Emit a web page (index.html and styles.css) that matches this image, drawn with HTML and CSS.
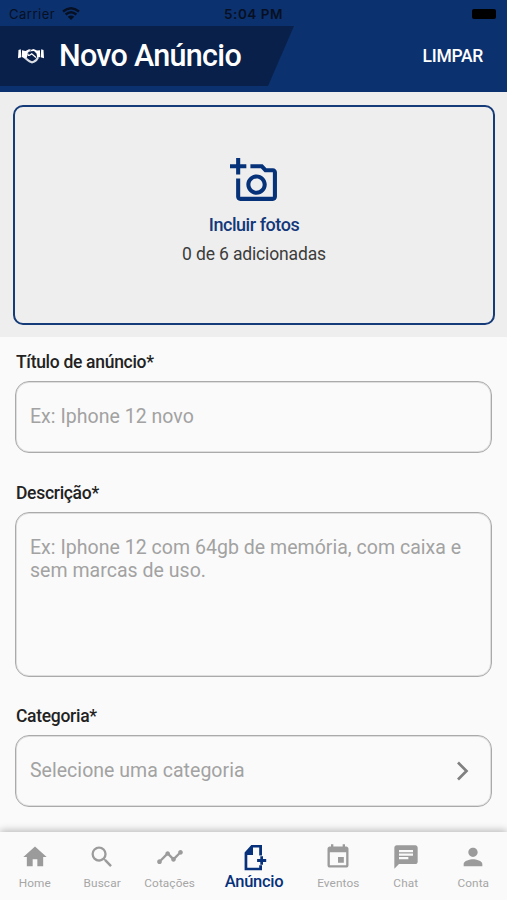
FILE: index.html
```html
<!DOCTYPE html>
<html lang="pt-BR">
<head>
<meta charset="utf-8">
<title>Novo Anúncio</title>
<link rel="stylesheet" href="styles.css">
</head>
<body>
<div class="app">
  <header class="header">
    <div class="status">
      <div class="carrier"><span class="carrier-name">Carrier</span>
        <svg class="wifi" viewBox="0 0 18 13"><path d="M1 4.500Q9-2 17 4.500M3.600 7.500Q9 3 14.400 7.500" fill="none" stroke="currentColor" stroke-width="2.400"/><path d="M5.700 9.800Q9 7.200 12.300 9.800L9 13z" fill="currentColor"/></svg>
      </div>
      <div class="clock">5:04 PM</div>
      <div class="power"><span class="battery"></span></div>
    </div>
    <div class="titlebar">
      <div class="title">
        <svg class="handshake" viewBox="0 0 26 16"><path d="M.5 2L2.800 1.200 3.300 9.200 0 10.300zM25.500 2l-2.300-.8-.5 8 3.300 1.100zM4 2.200L7.500 3.100 11 1.300 13.500 1.700 9.500 5 9 9.800 6 10 3.900 9zM22 2.200l-3 .4-3.500-1.500-3 .8-2 2 2.500-.6 3-.2 2.500 2.500.8 4.300L22 9z" fill="currentColor"/><path d="M6 9l3.300 2.700 2.200 1.600 2.500 1.100 2.200-.9 2-1.400 1.700-2.400" fill="none" stroke="currentColor" stroke-width="2.200" opacity=".85"/><path d="M10 5.500q-.5 2.500 1.700 1.700l2-1.400 4.300 3.800" fill="none" stroke="currentColor" stroke-width="1.300"/></svg>
        <h1>Novo Anúncio</h1>
      </div>
      <button class="clear">LIMPAR</button>
    </div>
  </header>
  <section class="photos">
    <div class="upload">
      <svg class="camera" viewBox="0 0 24 24"><path d="M21 6h-3.170L16 4h-6v2h5.120l1.830 2H21v12H5v-9H3v9c0 1.100.9 2 2 2h16c1.100 0 2-.9 2-2V8c0-1.100-.9-2-2-2zM8 14c0 2.760 2.240 5 5 5s5-2.240 5-5-2.240-5-5-5-5 2.240-5 5zm5-3c1.650 0 3 1.350 3 3s-1.350 3-3 3-3-1.350-3-3 1.350-3 3-3zM5 6h3V4H5V1H3v3H0v2h3v3h2z" fill="currentColor"/></svg>
      <div class="upload-title">Incluir fotos</div>
      <div class="upload-count">0 de 6 adicionadas</div>
    </div>
  </section>
  <main class="form">
    <label class="label">Título de anúncio*</label>
    <div class="field"><span>Ex: Iphone 12 novo</span></div>
    <label class="label">Descrição*</label>
    <div class="field field-area"><span>Ex: Iphone 12 com 64gb de memória, com caixa e sem marcas de uso.</span></div>
    <label class="label">Categoria*</label>
    <div class="field field-select"><span>Selecione uma categoria</span>
      <svg class="chevron" viewBox="0 0 12 20"><path d="M1 1.500l8.500 8.500L1 18.500" fill="none" stroke="currentColor" stroke-width="2.700"/></svg>
    </div>
  </main>
  <nav class="nav">
    <div class="tab"><svg viewBox="0 0 24 24"><path d="M10 20v-6h4v6h5v-8h3L12 3 2 12h3v8z"/></svg><span>Home</span></div>
    <div class="tab"><svg viewBox="0 0 24 24"><path d="M15.500 14h-.79l-.28-.27A6.471 6.471 0 0 0 16 9.500 6.500 6.500 0 1 0 9.500 16c1.610 0 3.090-.59 4.230-1.570l.27.28v.79l5 4.990L20.490 19zm-6 0C7.010 14 5 11.990 5 9.500S7.010 5 9.500 5 14 7.010 14 9.500 11.990 14 9.500 14z"/></svg><span>Buscar</span></div>
    <div class="tab"><svg viewBox="0 0 24 24"><path d="M23 8c0 1.100-.9 2-2 2-.18 0-.35-.02-.51-.07l-3.560 3.550c.05.16.07.34.07.52 0 1.100-.9 2-2 2s-2-.9-2-2c0-.18.02-.36.07-.52l-2.550-2.550c-.16.05-.34.07-.52.07s-.36-.02-.52-.07l-4.550 4.560c.05.16.07.33.07.51 0 1.100-.9 2-2 2s-2-.9-2-2 .9-2 2-2c.18 0 .35.02.51.07l4.560-4.550C8.020 9.360 8 9.180 8 9c0-1.100.9-2 2-2s2 .9 2 2c0 .18-.02.36-.07.52l2.550 2.550c.16-.05.34-.07.52-.07s.36.02.52.07l3.550-3.560C19.020 8.350 19 8.180 19 8c0-1.100.9-2 2-2s2 .9 2 2z"/></svg><span>Cotações</span></div>
    <div class="tab tab-active"><svg viewBox="0 0 28 28"><path d="M11.300 2H22v10.500h-2.800V4.500h-6.200V12H7.300v12.700h11.900v-2.500H22v5H4.600V9.500z"/><path d="M20.300 13.300h2.700v2.800h3.200v2.900H23v2.800h-2.700v-2.800h-3.200v-2.900h3.200z"/></svg><span>Anúncio</span></div>
    <div class="tab"><svg viewBox="0 0 24 24"><path d="M17 12h-5v5h5zM16 1v2H8V1H6v2H5c-1.110 0-1.990.9-1.990 2L3 19c0 1.100.89 2 2 2h14c1.100 0 2-.9 2-2V5c0-1.100-.9-2-2-2h-1V1zm3 18H5V8h14z"/></svg><span>Eventos</span></div>
    <div class="tab"><svg viewBox="0 0 24 24"><path d="M20 2H4c-1.100 0-1.990.9-1.990 2L2 22l4-4h14c1.100 0 2-.9 2-2V4c0-1.100-.9-2-2-2zM6 9h12v2H6zm8 5H6v-2h8zm4-6H6V6h12z"/></svg><span>Chat</span></div>
    <div class="tab"><svg viewBox="0 0 24 24"><path d="M12 12c2.210 0 4-1.790 4-4s-1.790-4-4-4-4 1.790-4 4 1.790 4 4 4zm0 2c-2.670 0-8 1.340-8 4v2h16v-2c0-2.660-5.330-4-8-4z"/></svg><span>Conta</span></div>
  </nav>
</div>
</body>
</html>
```

FILE: styles.css
```css
* { box-sizing: border-box; }
body { margin: 0; font-family: Roboto, sans-serif; background: #fafafa; }
.app { width: 507px; height: 900px; display: flex; flex-direction: column; overflow: hidden; }
.header { height: 92px; flex: none; background: #0c316f; }
.status { height: 26px; display: grid; grid-template-columns: 1fr auto 1fr; align-items: center; padding: 2px 9px 0 9px; font-family: Inter, sans-serif; color: #071022; }
.carrier { display: flex; align-items: center; gap: 7px; font-size: 13px; letter-spacing: .5px; }
.wifi { width: 18px; height: 13px; margin-top: -2px; }
.clock { font-size: 13.500px; font-weight: 600; letter-spacing: .5px; }
.power { display: flex; justify-content: flex-end; }
.battery { width: 24px; height: 10px; margin: -1px 2px 0 0; border-radius: 2px; background: #000; }
.titlebar { height: 60px; display: flex; justify-content: space-between; }
.title { width: 294px; padding-left: 18px; display: flex; align-items: center; gap: 15px; color: #fff; background: #09204a; clip-path: polygon(0 0, 100% 0, 268px 100%, 0 100%); }
.handshake { width: 26px; height: 16px; }
h1 { margin: 0; font-size: 30.500px; line-height: 36px; font-weight: 500; letter-spacing: -.7px; white-space: nowrap; }
.clear { border: 0; padding: 0; margin-right: 24px; background: none; color: #fff; font: 500 17.500px Roboto, sans-serif; letter-spacing: -.3px; }
.photos { height: 245px; flex: none; padding: 13px 12px 12px 13px; background: #eee; }
.upload { height: 220px; border: 2px solid #153b78; border-radius: 10px; display: flex; flex-direction: column; align-items: center; padding-top: 49px; }
.camera { width: 49px; height: 49px; color: #06327a; }
.upload-title { margin-top: 9px; color: #12377a; font-size: 18px; line-height: 22px; font-weight: 500; letter-spacing: -.45px; }
.upload-count { margin-top: 7px; color: #3c3c3c; font-size: 17.500px; line-height: 22px; letter-spacing: -.15px; }
.form { flex: 1; padding: 15px 15px 0; }
.label { display: block; height: 22px; margin-bottom: 7px; padding-left: 1px; font-size: 17.500px; line-height: 21px; font-weight: 500; letter-spacing: -.3px; color: #222; }
.field { height: 72px; margin-bottom: 30px; padding: 23px 14px 0; border: 1px solid #aaa; border-radius: 14px; color: #a2a2a2; font-size: 19.500px; line-height: 23px; letter-spacing: .03px; box-shadow: inset 0 0 0 1px rgba(160,160,160,.3); }
.field-area { height: 165px; margin-bottom: 29px; }
.field-select { display: flex; justify-content: space-between; margin-bottom: 0; padding-right: 22px; }
.chevron { width: 12px; height: 20px; margin-top: 2px; color: #808080; }
.nav { height: 68px; flex: none; display: grid; grid-template-columns: repeat(3, 1fr) 1.500fr repeat(3, 1fr); padding: 0 0 0 1px; background: #fafafa; box-shadow: 0 -2px 7px rgba(0,0,0,.24); }
.tab { display: flex; flex-direction: column; align-items: center; padding-top: 11px; color: #9b9b9b; font-size: 11.800px; line-height: 16px; letter-spacing: .1px; }
.tab svg { width: 28px; height: 28px; fill: currentColor; flex: none; }
.tab span { margin-top: 4px; color: #a6a6a6; }
.tab-active { color: #07317a; font-size: 16.500px; font-weight: 500; letter-spacing: -.3px; }
.tab-active span { margin-top: 3px; color: inherit; }
```
